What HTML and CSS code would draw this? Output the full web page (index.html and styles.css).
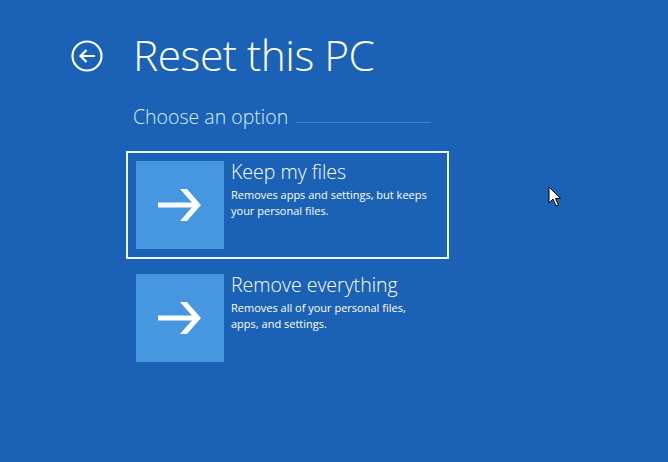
FILE: index.html
```html
<!DOCTYPE html>
<html>
<head>
<meta charset="utf-8">
<link rel="stylesheet" href="styles.css">
</head>
<body>
<div class="page">
  <header class="header">
    <svg class="back" width="32" height="32" viewBox="0 0 32 32">
      <circle cx="16" cy="16" r="14.5" fill="none" stroke="#fff" stroke-width="2.2"/>
      <path d="M24 16H9.5M15.5 10L9.5 16L15.5 22" fill="none" stroke="#fff" stroke-width="2.2"/>
    </svg>
    <h1 class="title">Reset this PC</h1>
  </header>
  <div class="subhead">
    <span class="subtitle">Choose an option</span>
    <span class="rule"></span>
  </div>
  <div class="options">
    <div class="option selected">
      <div class="tile">
        <svg width="44" height="34" viewBox="0 0 44 34"><rect x="0" y="14.5" width="37" height="5" fill="#fff"/><polygon points="22,1 29,1 43,17 29,33 22,33 36,17" fill="#fff"/></svg>
      </div>
      <div class="text">
        <div class="opt-title">Keep my files</div>
        <div class="opt-desc">Removes apps and settings, but keeps your personal files.</div>
      </div>
    </div>
    <div class="option">
      <div class="tile">
        <svg width="44" height="34" viewBox="0 0 44 34"><rect x="0" y="14.5" width="37" height="5" fill="#fff"/><polygon points="22,1 29,1 43,17 29,33 22,33 36,17" fill="#fff"/></svg>
      </div>
      <div class="text">
        <div class="opt-title">Remove everything</div>
        <div class="opt-desc">Removes all of your personal files, apps, and settings.</div>
      </div>
    </div>
  </div>
</div>
<svg class="cursor" width="14" height="22" viewBox="0 0 14 22">
  <path d="M1 1V17L5 13L8 20L10.5 19L7.5 12.5H12.5Z" fill="#fff" stroke="#000" stroke-width="1"/>
</svg>
</body>
</html>
```
FILE: styles.css
```css
html, body {
  margin: 0;
  height: 100%;
}
body {
  background: #1b62b6;
  font-family: "Open Sans", "Noto Sans", sans-serif;
  color: #fff;
  overflow: hidden;
  position: relative;
}
.page {
  padding-top: 24px;
}
.header {
  display: flex;
  align-items: center;
  height: 62px;
}
.back {
  margin-left: 71px;
  margin-top: 2px;
}
.title {
  margin: 0 0 0 30px;
  font-weight: 300;
  font-size: 42.5px;
  letter-spacing: -0.5px;
  line-height: 62px;
}
.subhead {
  display: flex;
  align-items: flex-end;
  margin-left: 133px;
  margin-top: 15px;
  height: 30px;
}
.subtitle {
  font-weight: 300;
  font-size: 19.5px;
  line-height: 28px;
  color: #d8ecff;
}
.rule {
  width: 135px;
  margin-left: 8px;
  margin-bottom: 8px;
  border-bottom: 1px solid #3f82cc;
}
.options {
  margin-left: 126px;
  margin-top: 20px;
  display: flex;
  flex-direction: column;
  gap: 5px;
}
.option {
  width: 303px;
  display: flex;
  border: 2px solid transparent;
  padding: 8px;
  gap: 7px;
}
.option.selected {
  border-color: #eef6ff;
}
.tile {
  width: 88px;
  height: 88px;
  background: #4796e0;
  display: flex;
  align-items: center;
  justify-content: center;
  flex: none;
}
.text {
  margin-top: -2px;
}
.opt-title {
  font-weight: 300;
  font-size: 19.5px;
  line-height: 26px;
}
.opt-desc {
  font-size: 11px;
  line-height: 16px;
  margin-top: 2px;
  width: 200px;
}
.cursor {
  position: absolute;
  left: 548px;
  top: 186px;
}
```
